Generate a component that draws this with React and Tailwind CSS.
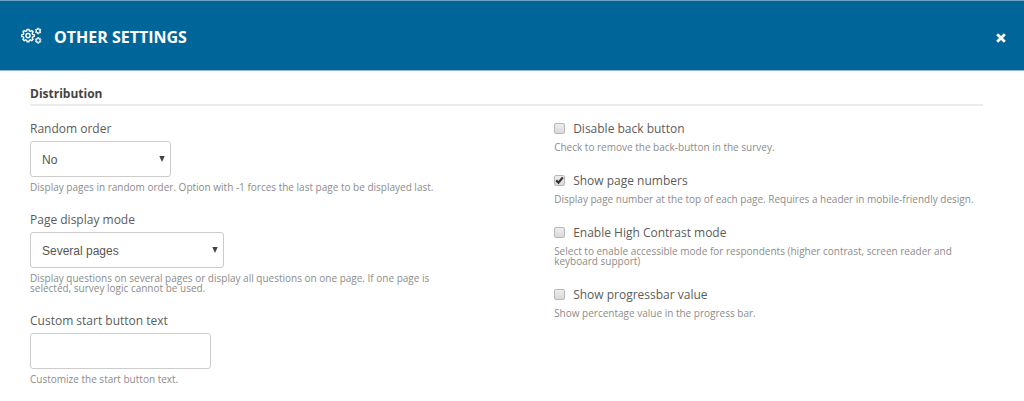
import React from "react";

function gearPath(cx, cy, outer, inner, teeth) {
  const step = (Math.PI * 2) / teeth;
  const points = [];
  for (let i = 0; i < teeth; i++) {
    const a = i * step - Math.PI / 2;
    [[-0.32, inner], [-0.19, outer], [0.19, outer], [0.32, inner]].forEach(([f, r]) => {
      const t = a + f * step;
      points.push(`${(cx + r * Math.cos(t)).toFixed(2)} ${(cy + r * Math.sin(t)).toFixed(2)}`);
    });
  }
  return `M${points.join("L")}Z`;
}

function GearsIcon() {
  return (
    <svg viewBox="0 0 22 18" className="h-[18px] w-[22px]" fill="none" stroke="currentColor" strokeLinejoin="round" aria-hidden="true">
      <path d={gearPath(7, 8.6, 6.3, 4.9, 8)} strokeWidth="1.4" />
      <circle cx="7" cy="8.6" r="2.1" strokeWidth="1.4" />
      <path d={gearPath(17.2, 4, 2.9, 2.3, 6)} strokeWidth="1" />
      <circle cx="17.2" cy="4" r="1.8" strokeWidth="1" />
      <path d={gearPath(17.2, 13.4, 2.9, 2.3, 6)} strokeWidth="1" />
      <circle cx="17.2" cy="13.4" r="1.8" strokeWidth="1" />
    </svg>
  );
}

function Help({ id, children }) {
  return (
    <p id={id} className="mt-[5px] max-w-[428px] text-[10px] leading-[10px] text-[#8c8c8c]">
      {children}
    </p>
  );
}

function Field({ id, label, help, children }) {
  return (
    <div>
      <label htmlFor={id} className="mb-1 block pt-0.5 text-xs leading-4">{label}</label>
      {children}
      <Help id={`${id}-help`}>{help}</Help>
    </div>
  );
}

function SelectField({ id, label, help, options, width }) {
  return (
    <Field id={id} label={label} help={help}>
      <div className={`relative ${width}`}>
        <select
          id={id}
          aria-describedby={`${id}-help`}
          className="block h-9 w-full appearance-none rounded-[3px] border border-[#ccc] bg-white pt-px pr-6 pl-[11px] font-['Liberation_Sans',Arial,sans-serif] text-xs text-[#555]"
        >
          {options.map((o) => <option key={o}>{o}</option>)}
        </select>
        <svg viewBox="0 0 6 6" className="pointer-events-none absolute top-[15px] right-[6px] size-[6px]" fill="#444" aria-hidden="true">
          <path d="M0.3 0H5.7L3 6Z" />
        </svg>
      </div>
    </Field>
  );
}

function CheckField({ id, label, help, checked }) {
  return (
    <div>
      <div className="flex items-center gap-2">
        <span className="relative flex">
          <input
            id={id}
            type="checkbox"
            defaultChecked={checked}
            aria-describedby={`${id}-help`}
            className="peer size-[11px] appearance-none rounded-[2px] border border-[#b8b8b8] bg-linear-to-b from-[#eee] to-[#d9d9d9]"
          />
          <svg viewBox="0 0 11 11" className="pointer-events-none absolute inset-0 hidden size-[11px] peer-checked:block" fill="none" stroke="#333" strokeWidth="2.2" aria-hidden="true">
            <path d="M2.2 5.4L4.5 7.6L8.8 2.4" />
          </svg>
        </span>
        <label htmlFor={id} className="pt-0.5 text-xs leading-4">{label}</label>
      </div>
      <Help id={`${id}-help`}>{help}</Help>
    </div>
  );
}

export default function App() {
  return (
    <div className="min-h-screen bg-white font-['Open_Sans',sans-serif] text-[#5c5c5c]">
      <header className="flex h-[71px] items-center justify-between border-y border-t-[#6ba3c0] border-b-[#8db8cf] bg-[#006699] pr-[18px] pl-[21px] text-white">
        <div className="flex items-center gap-[11px]">
          <GearsIcon />
          <h1 className="pt-0.5 text-base leading-5 font-bold">OTHER SETTINGS</h1>
        </div>
        <button type="button" aria-label="Close" className="mt-1 flex">
          <svg viewBox="0 0 10 10" className="size-[10px]" stroke="currentColor" strokeWidth="2.8" aria-hidden="true">
            <path d="M1.2 1.2L8.8 8.8M8.8 1.2L1.2 8.8" />
          </svg>
        </button>
      </header>
      <main className="pt-[13px] pr-[41px] pl-[30px]">
        <h2 className="border-b-2 border-[#ececec] pt-0.5 pb-0.5 text-xs leading-4 font-bold text-[#444]">Distribution</h2>
        <div className="grid grid-cols-[11fr_9fr] pt-[13px]">
          <div className="flex flex-col gap-[18px]">
            <SelectField id="order" label="Random order" width="w-[141px]" options={["No", "Yes", "-1"]}
              help="Display pages in random order. Option with -1 forces the last page to be displayed last." />
            <SelectField id="mode" label="Page display mode" width="w-[194px]" options={["Several pages", "One page"]}
              help="Display questions on several pages or display all questions on one page. If one page is selected, survey logic cannot be used." />
            <Field id="start" label="Custom start button text" help="Customize the start button text.">
              <input id="start" type="text" aria-describedby="start-help"
                className="block h-9 w-[181px] rounded-[3px] border border-[#ccc] bg-white px-3 text-xs" />
            </Field>
          </div>
          <div className="flex flex-col gap-[19px]">
            <CheckField id="back" label="Disable back button" help="Check to remove the back-button in the survey." />
            <CheckField id="numbers" checked label="Show page numbers" help="Display page number at the top of each page. Requires a header in mobile-friendly design." />
            <CheckField id="contrast" label="Enable High Contrast mode" help="Select to enable accessible mode for respondents (higher contrast, screen reader and keyboard support)" />
            <CheckField id="progress" label="Show progressbar value" help="Show percentage value in the progress bar." />
          </div>
        </div>
      </main>
    </div>
  );
}
